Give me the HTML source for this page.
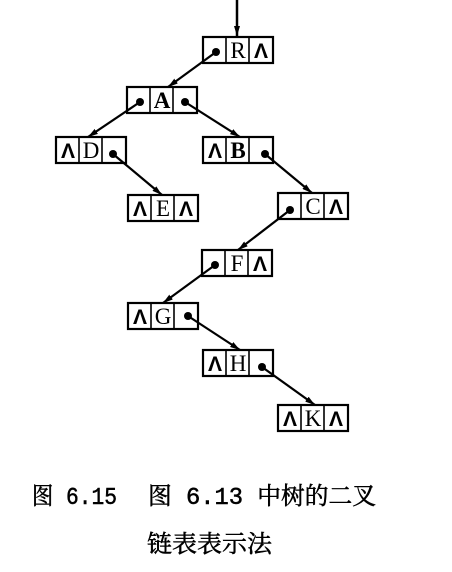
<!DOCTYPE html>
<html><head><meta charset="utf-8"><style>
html,body{margin:0;padding:0;background:#fff;width:452px;height:572px;overflow:hidden}
svg{display:block}
.t{font-family:"Liberation Serif","Noto Serif CJK SC",serif;font-size:23px;fill:#000}
.l{font-family:"Liberation Sans",sans-serif;font-size:21px;font-weight:bold;fill:#000}
.c{font-family:"Liberation Mono","Noto Serif CJK SC","Noto Sans CJK SC",serif;font-size:24px;fill:#000;stroke:#000;stroke-width:0.5}
</style></head><body>
<svg width="452" height="572" viewBox="0 0 452 572" xmlns="http://www.w3.org/2000/svg">
<defs><marker id="ar" markerWidth="10" markerHeight="6" refX="10" refY="3" orient="auto" markerUnits="userSpaceOnUse"><path d="M0,0 L10,3 L0,6 Z" fill="#000"/></marker>
<g id="n"><rect x="0" y="0" width="70" height="26" fill="#fff" stroke="#000" stroke-width="2.2"/><line x1="23" y1="0" x2="23" y2="26" stroke="#000" stroke-width="1.6"/><line x1="46" y1="0" x2="46" y2="26" stroke="#000" stroke-width="1.6"/></g></defs>
<line x1="237" y1="0" x2="237" y2="36" stroke="#000" stroke-width="2.5" marker-end="url(#ar)"/>
<use href="#n" x="203" y="37"/><use href="#n" x="127" y="87"/><use href="#n" x="56" y="137"/><use href="#n" x="203" y="137"/><use href="#n" x="128" y="195"/><use href="#n" x="278" y="193"/><use href="#n" x="202" y="250"/><use href="#n" x="128" y="303"/><use href="#n" x="203" y="350"/><use href="#n" x="278" y="405"/>
<g stroke="#000" stroke-width="2.2" marker-end="url(#ar)">
<line x1="216" y1="52" x2="168" y2="87"/>
<line x1="140" y1="102" x2="88" y2="137"/>
<line x1="185" y1="102" x2="240" y2="137"/>
<line x1="113" y1="154" x2="162" y2="195"/>
<line x1="265" y1="154" x2="312" y2="193"/>
<line x1="290" y1="210" x2="238" y2="250"/>
<line x1="215" y1="265" x2="163" y2="303"/>
<line x1="188" y1="316" x2="240" y2="350"/>
<line x1="262" y1="367" x2="315" y2="405"/>
</g>
<g fill="#000">
<circle cx="216" cy="52" r="4"/><circle cx="140" cy="102" r="4"/><circle cx="185" cy="102" r="4"/><circle cx="113" cy="154" r="4"/><circle cx="265" cy="154" r="4"/><circle cx="290" cy="210" r="4"/><circle cx="215" cy="265" r="4"/><circle cx="188" cy="316" r="4"/><circle cx="262" cy="367" r="4"/>
</g>
<g class="t" text-anchor="middle">
<text x="238" y="58">R</text>
<text x="162" y="108" font-weight="bold">A</text>
<text x="91" y="158">D</text>
<text x="238" y="158" font-weight="bold">B</text>
<text x="163" y="216">E</text>
<text x="313" y="214">C</text>
<text x="237" y="271">F</text>
<text x="163" y="324">G</text>
<text x="238" y="371">H</text>
<text x="313" y="426">K</text>
</g>
<g class="l" text-anchor="middle">
<text x="261" y="58">Λ</text>
<text x="68" y="158">Λ</text>
<text x="215" y="158">Λ</text>
<text x="140" y="216">Λ</text><text x="186" y="216">Λ</text>
<text x="336" y="214">Λ</text>
<text x="260" y="271">Λ</text>
<text x="140" y="324">Λ</text>
<text x="215" y="371">Λ</text>
<text x="290" y="426">Λ</text><text x="336" y="426">Λ</text>
</g>
<text class="c" x="32" y="504" textLength="85" lengthAdjust="spacingAndGlyphs">图 6.15</text>
<text class="c" x="148" y="504" textLength="228" lengthAdjust="spacingAndGlyphs">图 6.13 中树的二叉</text>
<text class="c" x="147" y="552" textLength="125" lengthAdjust="spacingAndGlyphs">链表表示法</text>
</svg>
</body></html>
